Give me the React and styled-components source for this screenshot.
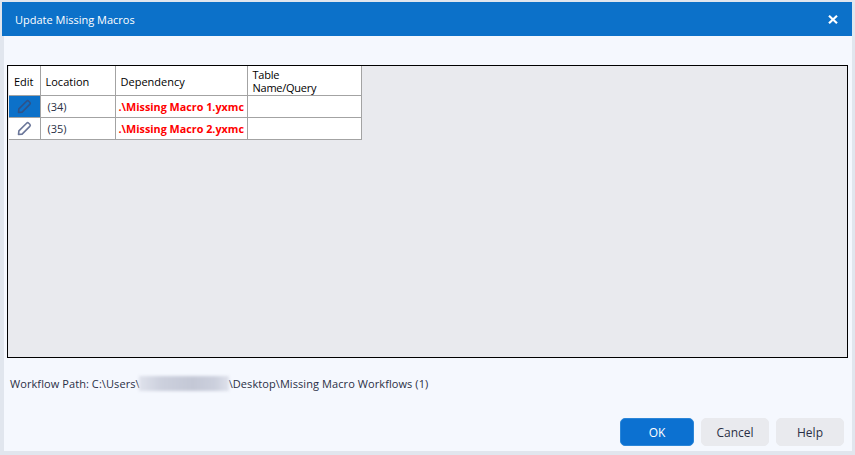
import React from "react";
import styled, { createGlobalStyle } from "styled-components";

const GlobalStyle = createGlobalStyle`
  html, body { margin: 0; padding: 0; background: #e1e6ee; }
  body { font-family: "Open Sans", "Noto Sans", sans-serif; }
`;

const Dialog = styled.div`
  width: 855px;
  height: 455px;
  box-sizing: border-box;
  padding: 2px 3px 4px 2px;
  display: flex;
  flex-direction: column;
  background: #e1e6ee;
  overflow: hidden;
`;
const TitleBar = styled.div`
  height: 34px;
  flex: none;
  display: flex;
  align-items: center;
  justify-content: space-between;
  padding: 0 14px 0 13px;
  background: #0c71c9;
  color: #fff;
  font-size: 11px;
`;
const CloseIcon = styled.svg`
  width: 10px;
  height: 9px;
  display: block;
`;
const Body = styled.div`
  flex: 1;
  display: flex;
  flex-direction: column;
  margin-left: 2px;
  background: #f5f8fe;
  padding: 29px 4px 0 3px;
`;
const GridPanel = styled.div`
  height: 293px;
  flex: none;
  box-sizing: border-box;
  border: 1px solid #000;
  background: #e9eaee;
  padding: 0 0 0 1px;
`;
const Table = styled.table`
  border-collapse: collapse;
  table-layout: fixed;
  width: 352px;
  background: #fff;
  color: #111;
  font-size: 11px;
  line-height: 13px;
`;
const Cell = styled.td`
  border: 1px solid #a3a3a3;
  border-top: ${(p) => (p.$head ? "none" : "1px solid #a3a3a3")};
  border-left: ${(p) => (p.$first ? "none" : "1px solid #a3a3a3")};
  height: ${(p) => (p.$head ? "29px" : "22px")};
  padding: 0 0 0 5px;
  box-sizing: border-box;
  background: ${(p) => (p.$active ? "#0c71c9" : "transparent")};
`;
const HeadCell = styled(Cell).attrs({ as: "th" })`
  font-weight: 400;
  text-align: left;
  color: #000;
  padding-top: ${(p) => (p.$tight ? "1px" : "3px")};
  letter-spacing: ${(p) => (p.$tight ? "-0.25px" : "0")};
`;
const LocationCell = styled(Cell)`
  padding-left: 7px;
  color: #2a2f45;
`;
const DependencyCell = styled(Cell)`
  padding-left: 3px;
  color: #f00;
  font-size: 10.8px;
  font-weight: 700;
  white-space: nowrap;
  overflow: hidden;
`;
const EditCell = styled(Cell)`
  padding: 0;
  text-align: center;
`;
const PencilIcon = styled.svg`
  display: block;
  width: 15px;
  height: 15px;
  margin: 0 auto;
`;
const PathRow = styled.div`
  margin-top: 17px;
  height: 16px;
  display: flex;
  align-items: center;
  padding-left: 3px;
  font-size: 11px;
  letter-spacing: 0.08px;
  color: #2a2f45;
  white-space: nowrap;
`;
const Redacted = styled.span`
  display: inline-block;
  width: 90px;
  height: 15px;
  margin-left: -1px;
  background: linear-gradient(90deg, #dfe2ec 0%, #ccd0dd 25%, #c4c8d6 60%, #ccd0dd 85%, #dfe2ec 100%);
  filter: blur(1.5px);
`;
const Footer = styled.div`
  margin-top: auto;
  margin-bottom: 5px;
  display: flex;
  justify-content: flex-end;
  gap: 7px;
  padding-right: 4px;
`;
const Button = styled.button`
  height: 28px;
  width: ${(p) => p.$width}px;
  border: 1px solid ${(p) => (p.$primary ? "#2b86d8" : "#e9eaee")};
  border-radius: 5px;
  background: ${(p) => (p.$primary ? "#0c71d1" : "#e9eaee")};
  color: ${(p) => (p.$primary ? "#fff" : "#2a2f45")};
  font-family: inherit;
  font-size: 12px;
  padding: 0;
`;

const Pencil = ({ color }) => (
  <PencilIcon viewBox="0 0 15 15" fill="none" stroke={color} strokeWidth="1.6" strokeLinejoin="round">
    <path d="M1.5 13.5 1.9 9.9 9.6 2.2a1.5 1.5 0 0 1 2.1 0l1.1 1.1a1.5 1.5 0 0 1 0 2.1L5.1 13.1l-3.6.4Z" />
  </PencilIcon>
);

const rows = [
  { location: "(34)", dependency: ".\\Missing Macro 1.yxmc", active: true },
  { location: "(35)", dependency: ".\\Missing Macro 2.yxmc" },
];

const App = () => (
  <Dialog>
    <GlobalStyle />
    <TitleBar>
      Update Missing Macros
      <CloseIcon viewBox="0 0 10 9">
        <path d="M1 .8l8 7.4M9 .8L1 8.2" stroke="#fff" strokeWidth="2.2" />
      </CloseIcon>
    </TitleBar>
    <Body>
      <GridPanel>
        <Table>
          <colgroup>
            <col style={{ width: 31 }} />
            <col style={{ width: 75 }} />
            <col style={{ width: 132 }} />
            <col style={{ width: 114 }} />
          </colgroup>
          <thead>
            <tr>
              <HeadCell $head $first>Edit</HeadCell>
              <HeadCell $head>Location</HeadCell>
              <HeadCell $head>Dependency</HeadCell>
              <HeadCell $head $tight>Table<br />Name/Query</HeadCell>
            </tr>
          </thead>
          <tbody>
            {rows.map((row) => (
              <tr key={row.location}>
                <EditCell $first $active={row.active}>
                  <Pencil color={row.active ? "#2f5288" : "#6a7699"} />
                </EditCell>
                <LocationCell>{row.location}</LocationCell>
                <DependencyCell>{row.dependency}</DependencyCell>
                <Cell />
              </tr>
            ))}
          </tbody>
        </Table>
      </GridPanel>
      <PathRow>
        Workflow Path: C:\Users\<Redacted />\Desktop\Missing Macro Workflows (1)
      </PathRow>
      <Footer>
        <Button $primary $width={74}>OK</Button>
        <Button $width={68}>Cancel</Button>
        <Button $width={68}>Help</Button>
      </Footer>
    </Body>
  </Dialog>
);

export default App;
